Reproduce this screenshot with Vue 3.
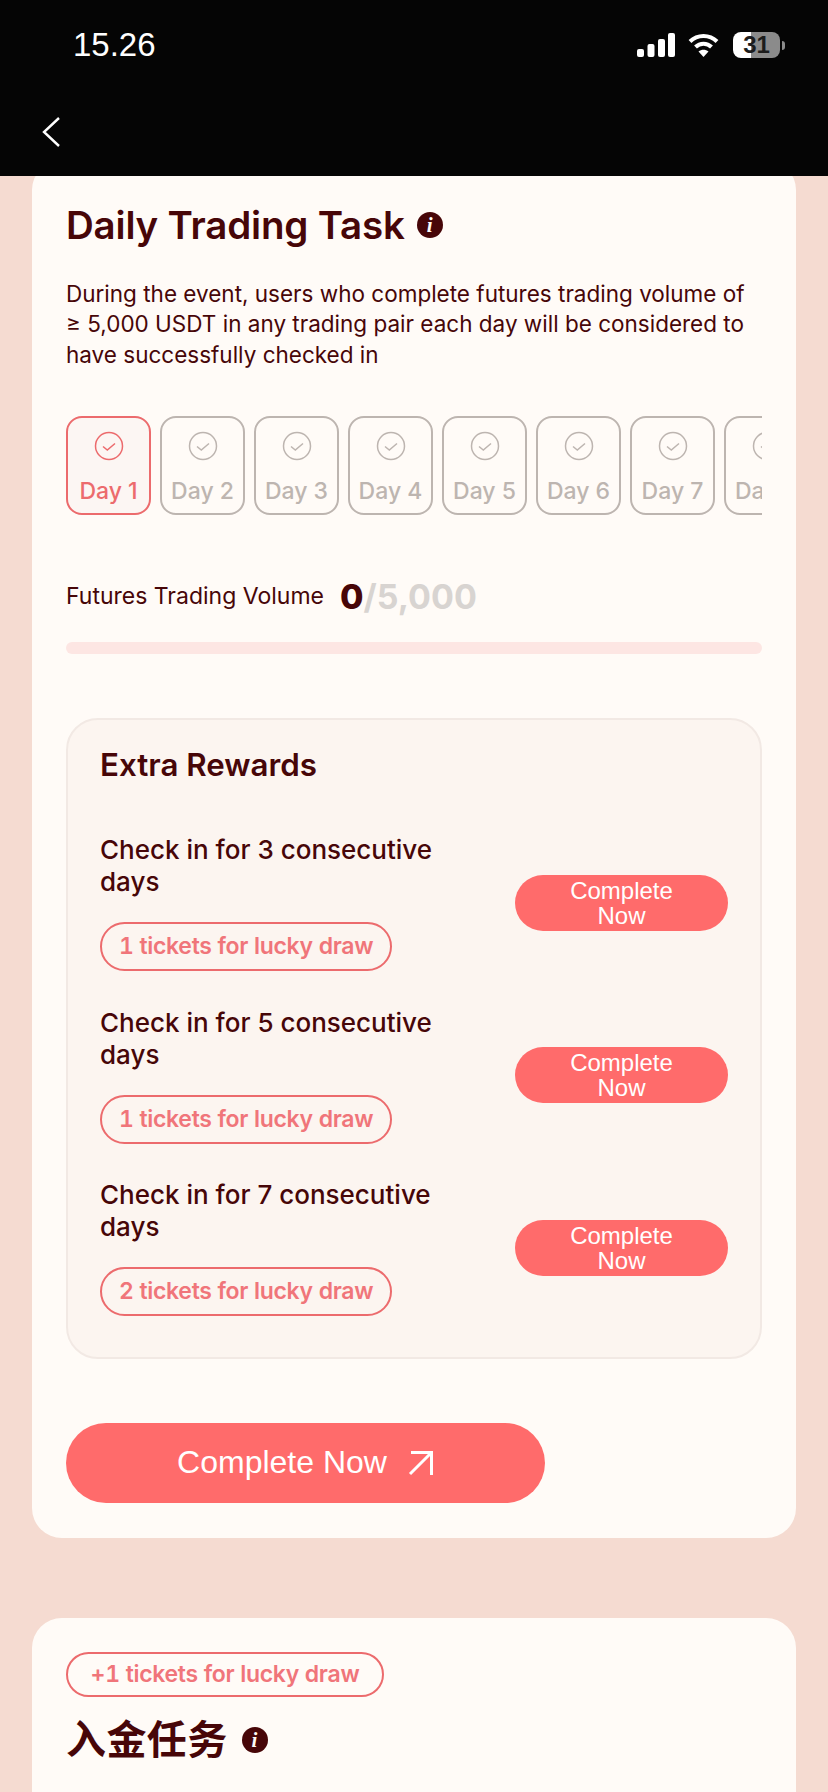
<script setup>
const days = [1, 2, 3, 4, 5, 6, 7, 8]

const rewards = [
  { id: 3, label: 'Check in for 3 consecutive days', tickets: '1 tickets for lucky draw' },
  { id: 5, label: 'Check in for 5 consecutive days', tickets: '1 tickets for lucky draw' },
  { id: 7, label: 'Check in for 7 consecutive days', tickets: '2 tickets for lucky draw' }
]
</script>

<template>
  <div class="page">
    <header class="top-bar">
      <div class="status-row">
        <span class="time">15.26</span>
        <div class="status-icons">
          <svg class="signal" width="38" height="24" viewBox="0 0 38 24" fill="#fff" aria-hidden="true">
            <rect x="0" y="16" width="7" height="8" rx="2" />
            <rect x="10.5" y="11" width="7" height="13" rx="2" />
            <rect x="21" y="6" width="7" height="18" rx="2" />
            <rect x="31" y="0" width="7" height="24" rx="2" />
          </svg>
          <svg class="wifi" width="31" height="24" viewBox="0 0 31 24" fill="none" stroke="#fff" stroke-width="4" aria-hidden="true">
            <path d="M2 8.5C9.5 1 21.500 1 29 8.500" />
            <path d="M7.500 14C12 9.500 19 9.500 23.500 14" />
            <path d="M15.500 24L10.500 18.500C13.500 16 17.500 16 20.500 18.500Z" fill="#fff" stroke="none" />
          </svg>
          <div class="battery">
            <span class="battery-body">31</span>
            <span class="battery-nub"></span>
          </div>
        </div>
      </div>
      <svg class="back" width="18" height="30" viewBox="0 0 18 30" fill="none" stroke="#fff" stroke-width="2.400" aria-hidden="true">
        <path d="M17 1L2 15L17 29" />
      </svg>
    </header>

    <main class="content">
      <section class="card first-card">
        <h1 class="card-title">
          Daily Trading Task
          <span class="info-icon">i</span>
        </h1>
        <p class="desc">
          During the event, users who complete futures trading volume of ≥ 5,000 USDT in any trading pair each day will be considered to have successfully checked in
        </p>

        <div class="day-strip">
          <div v-for="day in days" :key="day" :class="['day', { active: day === 1 }]">
            <svg width="30" height="30" viewBox="0 0 30 30" fill="none" stroke="currentColor" stroke-width="1.500" aria-hidden="true">
              <circle cx="15" cy="15" r="13.500" />
              <path d="M9 15.500L13.300 19L21 12.500" />
            </svg>
            <span class="day-label">Day {{ day }}</span>
          </div>
        </div>

        <div class="volume">
          <span class="volume-label">Futures Trading Volume</span>
          <span class="volume-value"><b>0</b>/5,000</span>
        </div>
        <div class="track"></div>

        <div class="extra">
          <h2 class="extra-title">Extra Rewards</h2>
          <div class="reward-list">
            <div v-for="reward in rewards" :key="reward.id" class="reward">
              <div class="reward-info">
                <div class="reward-label">{{ reward.label }}</div>
                <span class="ticket-pill">{{ reward.tickets }}</span>
              </div>
              <button class="small-btn">Complete Now</button>
            </div>
          </div>
        </div>

        <button class="main-btn">
          Complete Now
          <svg width="26" height="26" viewBox="0 0 26 26" fill="none" stroke="#fff" stroke-width="3" aria-hidden="true">
            <path d="M2 24L24 2" />
            <path d="M3 2.500H23.500V25" />
          </svg>
        </button>
      </section>

      <section class="card second-card">
        <span class="ticket-pill plus-pill">+1 tickets for lucky draw</span>
        <h1 class="card-title cjk-title">
          入金任务
          <span class="info-icon">i</span>
        </h1>
      </section>
    </main>
  </div>
</template>

<style scoped>
.page {
  height: 1792px;
  overflow: hidden;
  background: #f5dbd1;
  font-family: Inter, "Noto Sans CJK SC", sans-serif;
  color: #470608;
}

/* Black status + nav area */
.top-bar {
  position: relative;
  z-index: 2;
  height: 176px;
  box-sizing: border-box;
  padding: 27px 43px 0 42px;
  background: #050505;
}

.status-row {
  display: flex;
  justify-content: space-between;
  align-items: center;
  height: 36px;
  padding-left: 31px;
}

.time {
  font-family: "Liberation Sans", sans-serif;
  font-size: 33px;
  color: #fff;
}

.status-icons {
  display: flex;
  align-items: center;
}

.signal {
  margin-right: 13px;
}

.wifi {
  margin-right: 14px;
}

.battery {
  display: flex;
  align-items: center;
  gap: 2px;
}

.battery-body {
  width: 47px;
  height: 26px;
  border-radius: 8px;
  background: linear-gradient(90deg, #fff 38%, #8b8b8b 38%);
  color: #1c1c1c;
  font-family: "Liberation Sans", sans-serif;
  font-size: 24px;
  font-weight: 700;
  line-height: 26px;
  text-align: center;
}

.battery-nub {
  width: 3px;
  height: 9px;
  border-radius: 0 3px 3px 0;
  background: #8b8b8b;
}

.back {
  display: block;
  margin-top: 54px;
}

/* Cards */
.content {
  display: flex;
  flex-direction: column;
  gap: 80px;
  padding: 0 32px;
}

.card {
  background: #fffbf7;
  border-radius: 30px;
  padding: 0 34px;
}

.first-card {
  margin-top: -16px;
  height: 1378px;
  box-sizing: border-box;
  padding-top: 42px;
}

.second-card {
  padding-top: 34px;
  padding-bottom: 60px;
}

.card-title {
  display: flex;
  align-items: center;
  gap: 12px;
  margin: 0;
  font-size: 38.500px;
  font-weight: 600;
  line-height: 46px;
  letter-spacing: -0.2px;
}

.info-icon {
  display: flex;
  align-items: center;
  justify-content: center;
  width: 26px;
  height: 26px;
  border-radius: 50%;
  background: #470608;
  color: #fffbf7;
  font-family: "Liberation Serif", serif;
  font-size: 21px;
  font-style: italic;
  font-weight: 700;
}

.desc {
  margin: 31px 0 0;
  font-size: 22.500px;
  line-height: 30.300px;
}

/* Day check-in strip */
.day-strip {
  display: flex;
  gap: 9px;
  margin-top: 46px;
  overflow: hidden;
}

.day {
  flex: none;
  display: flex;
  flex-direction: column;
  align-items: center;
  box-sizing: border-box;
  width: 85px;
  height: 99px;
  padding-top: 13px;
  border: 2px solid #bdb5b0;
  border-radius: 16px;
  color: #bdb5b0;
}

.day.active {
  border-color: #ec6b6d;
  background: #fcf6f3;
  color: #ec6b6d;
}

.day-label {
  margin-top: 16px;
  font-size: 23px;
  font-weight: 500;
  line-height: 28px;
  white-space: nowrap;
}

.volume {
  display: flex;
  align-items: center;
  gap: 16px;
  margin-top: 61px;
}

.volume-label {
  font-size: 23px;
}

.volume-value {
  color: #d8d4d1;
  font-size: 34px;
  font-weight: 700;
}

.volume-value b {
  color: #470608;
  font-weight: 800;
}

.track {
  height: 12px;
  margin-top: 25px;
  border-radius: 6px;
  background: #fde6e3;
}

/* Extra rewards box */
.extra {
  box-sizing: border-box;
  height: 641px;
  margin-top: 64px;
  padding: 27px 32px 0;
  border: 2px solid #f2e9e4;
  border-radius: 32px;
  background: #fcf5f0;
}

.extra-title {
  margin: 0;
  font-size: 31.300px;
  font-weight: 600;
  line-height: 36px;
}

.reward-list {
  display: flex;
  flex-direction: column;
  gap: 12.500px;
  margin-top: 40px;
}

.reward {
  display: flex;
  align-items: center;
  justify-content: space-between;
  height: 160px;
}

.reward-info {
  width: 340px;
}

.reward-label {
  font-size: 26px;
  font-weight: 500;
  line-height: 32px;
}

.ticket-pill {
  display: inline-block;
  box-sizing: border-box;
  height: 49px;
  margin-top: 24px;
  padding: 0 17px;
  border: 2px solid #ec6b6d;
  border-radius: 25px;
  color: #f0757a;
  font-size: 23px;
  font-weight: 600;
  font-variant-numeric: tabular-nums;
  line-height: 45px;
  letter-spacing: -0.3px;
  white-space: nowrap;
}

.small-btn {
  width: 213px;
  height: 56px;
  padding: 0 50px;
  border: none;
  border-radius: 28px;
  background: #ff6b6b;
  color: #fff;
  font-family: "Liberation Sans", sans-serif;
  font-size: 24px;
  line-height: 25px;
}

.main-btn {
  display: flex;
  align-items: center;
  justify-content: center;
  gap: 21px;
  width: 479px;
  height: 80px;
  margin-top: 64px;
  border: none;
  border-radius: 40px;
  background: #ff6b6b;
  color: #fff;
  font-family: "Liberation Sans", sans-serif;
  font-size: 32px;
}

.plus-pill {
  display: block;
  width: 318px;
  height: 45px;
  margin-top: 0;
  padding: 0;
  text-align: center;
  line-height: 41px;
}

.cjk-title {
  gap: 14px;
  margin-top: 19px;
  font-size: 40px;
  font-weight: 700;
  line-height: 48px;
  letter-spacing: 0.4px;
}
</style>
